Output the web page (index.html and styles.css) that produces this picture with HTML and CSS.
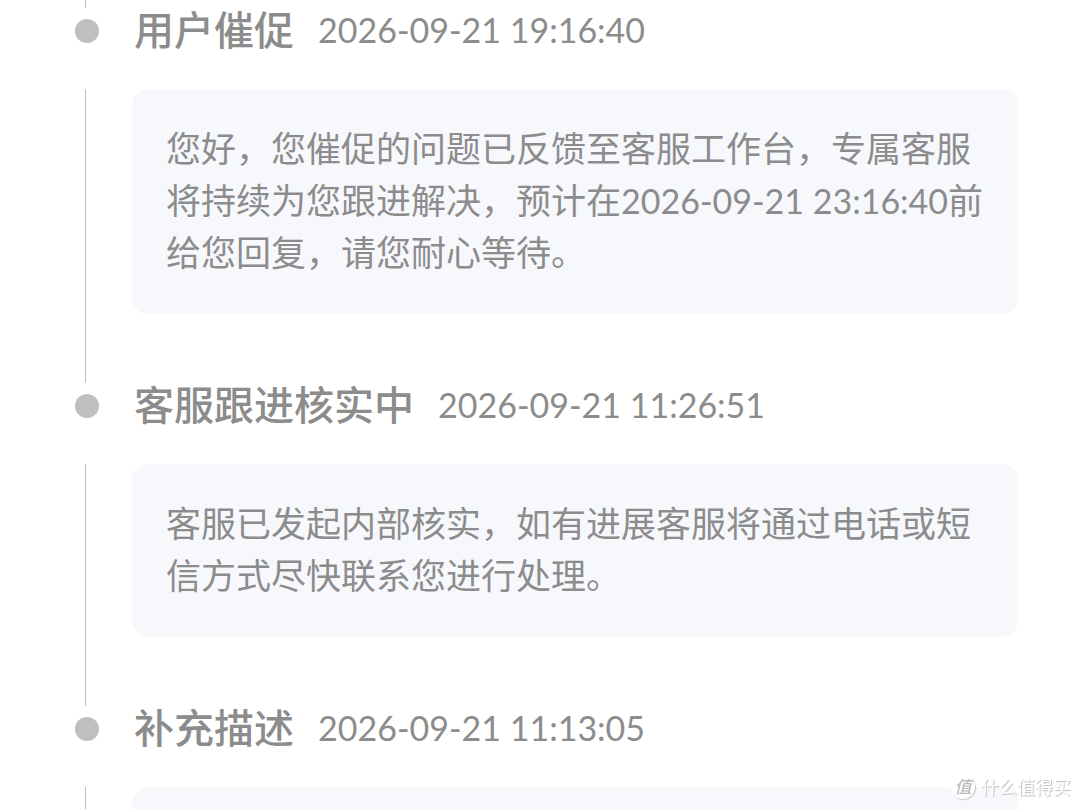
FILE: index.html
```html
<!DOCTYPE html>
<html lang="zh-CN">
<head>
<meta charset="utf-8">
<meta name="viewport" content="width=device-width, initial-scale=1">
<title>服务进度</title>
<link rel="stylesheet" href="styles.css">
</head>
<body>
<main class="page">
  <div class="stub"></div>
  <ol class="timeline">
    <li class="item">
      <span class="dot"></span>
      <header class="head">
        <h2 class="title">用户催促</h2>
        <time class="time" datetime="2026-09-21T19:16:40">2026-09-21 19:16:40</time>
      </header>
      <span class="line"></span>
      <p class="card">您好，您催促的问题已反馈至客服工作台，专属客服将持续为您跟进解决，预计在<time class="time" datetime="2026-09-21T23:16:40">2026-09-21 23:16:40</time>前给您回复，请您耐心等待。</p>
    </li>
    <li class="item">
      <span class="dot"></span>
      <header class="head">
        <h2 class="title">客服跟进核实中</h2>
        <time class="time" datetime="2026-09-21T11:26:51">2026-09-21 11:26:51</time>
      </header>
      <span class="line"></span>
      <p class="card">客服已发起内部核实，如有进展客服将通过电话或短信方式尽快联系您进行处理。</p>
    </li>
    <li class="item">
      <span class="dot"></span>
      <header class="head">
        <h2 class="title">补充描述</h2>
        <time class="time" datetime="2026-09-21T11:13:05">2026-09-21 11:13:05</time>
      </header>
      <span class="line"></span>
      <p class="card"></p>
    </li>
  </ol>
</main>
<div class="watermark"><span class="badge">值</span><span>什么值得买</span></div>
</body>
</html>
```
FILE: styles.css
```css
* { box-sizing: border-box; }

body {
  margin: 0;
  background: #fff;
  color: #8c8c8c;
  font-family: Lato, "Noto Sans CJK SC", sans-serif;
}

.page {
  height: 100vh;
  overflow: hidden;
  padding: 0 62px 0 75px;
}

.stub {
  width: 1px;
  height: 8px;
  margin-left: 10px;
  background: #bfbfbf;
}

.timeline {
  margin: 0;
  padding: 0;
  list-style: none;
}

.item {
  display: grid;
  grid-template-columns: 24px minmax(0, 1fr);
  column-gap: 33px;
}

.dot {
  width: 24px;
  height: 24px;
  margin-top: 11px;
  border-radius: 50%;
  background: #bfbfbf;
}

.head {
  display: flex;
  align-items: center;
  gap: 24px;
  margin-bottom: 37px;
  padding-left: 2px;
  line-height: 44px;
}

.title {
  margin: 0;
  font-size: 40px;
  font-weight: 500;
  white-space: nowrap;
}

.time {
  font-size: 34px;
  white-space: nowrap;
}

.line {
  width: 1px;
  margin-left: 10px;
  background: #bfbfbf;
}

.card {
  min-height: 173px;
  margin: 0 0 69px;
  padding: 33px 18px 36px 34px;
  border-radius: 16px;
  background: #f7f8fc;
  font-size: 35px;
  line-height: 52px;
}

.card .time {
  line-height: 1;
}

.watermark {
  position: fixed;
  right: 9px;
  bottom: 9px;
  display: flex;
  align-items: center;
  gap: 6px;
  color: #fff;
  font-size: 18px;
  line-height: 26px;
  text-shadow: 1px 1px 1px #bbb;
}

.badge {
  width: 24px;
  height: 24px;
  border-radius: 50%;
  background: #fff;
  box-shadow: 1px 1px 1px #ccc;
  color: #bbb;
  font-size: 17px;
  font-style: italic;
  font-weight: 500;
  line-height: 23px;
  text-align: center;
  text-shadow: none;
}
```
